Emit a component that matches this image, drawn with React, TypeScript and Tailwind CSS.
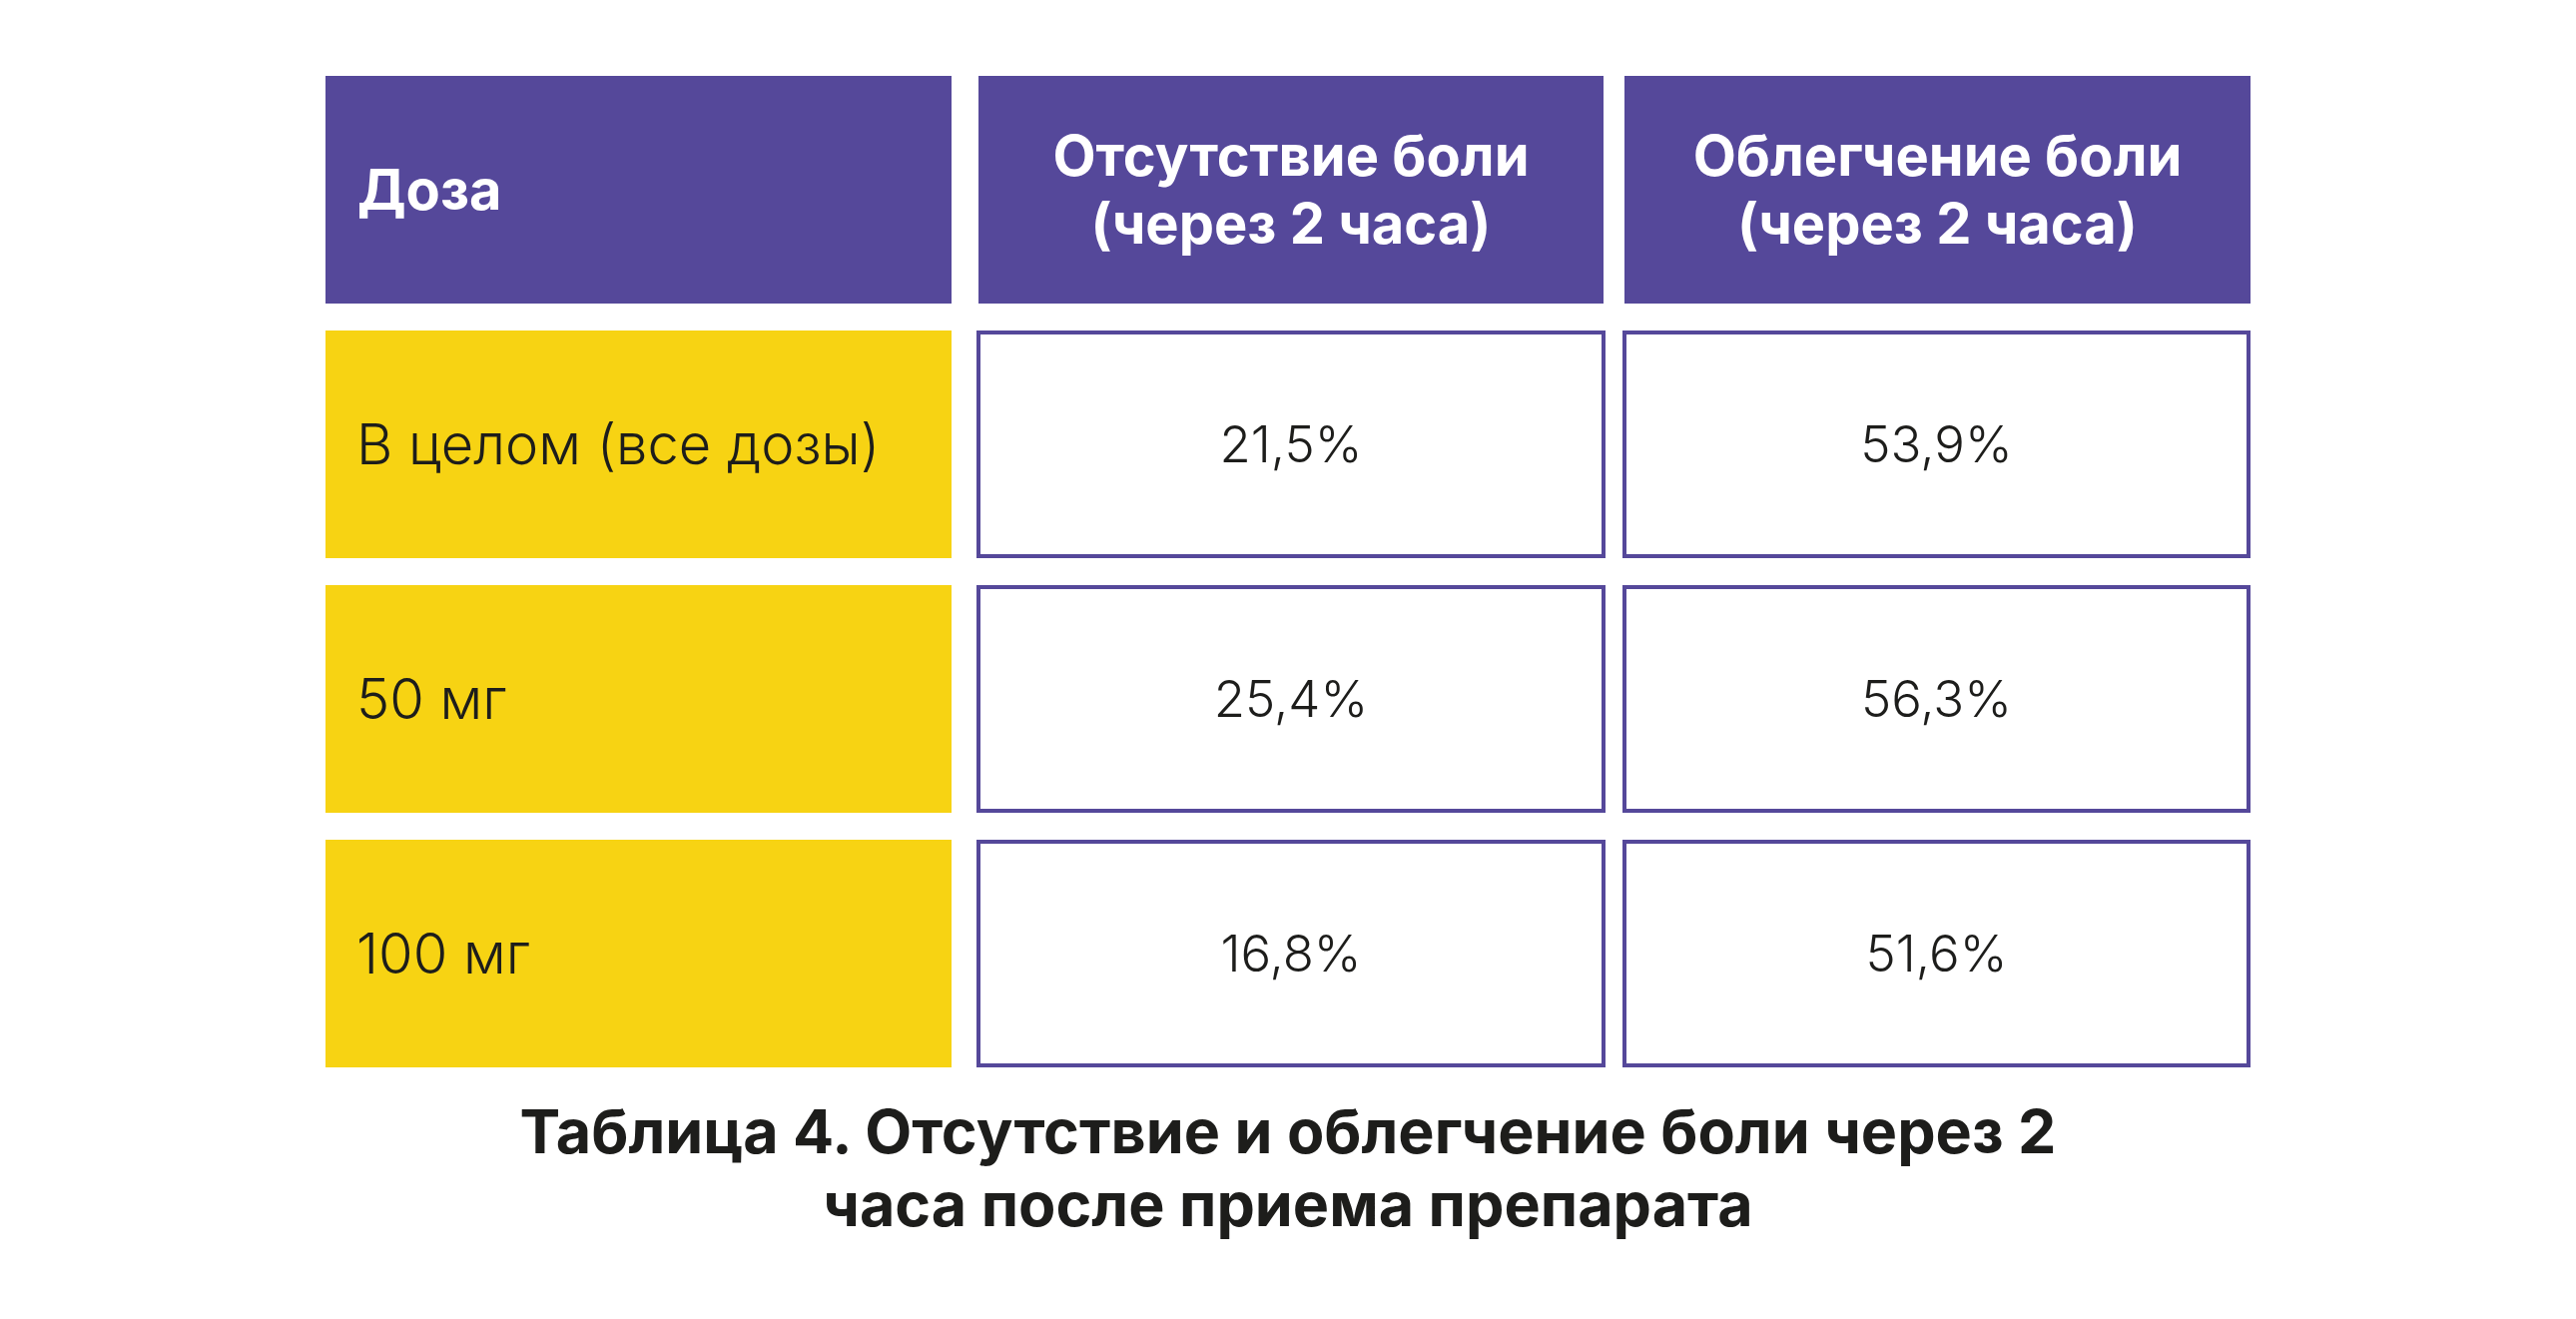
const rows = [
  { dose: 'В целом (все дозы)', absent: '21,5%', relief: '53,9%' },
  { dose: '50 мг', absent: '25,4%', relief: '56,3%' },
  { dose: '100 мг', absent: '16,8%', relief: '51,6%' },
];

const font = "font-['Inter','Noto_Sans',sans-serif]";

export default function App() {
  return (
    <div className={`min-h-screen w-full bg-white ${font}`}>
      <div className="flex flex-col items-center pt-[76px]">
        {/* шапка таблицы */}
        <div className="flex">
          <div className="flex h-[228px] w-[627px] items-center bg-[#55489a] pl-[32px] text-[56px] font-bold text-white">
            Доза
          </div>
          <div className="ml-[27px] flex h-[228px] w-[626px] items-center justify-center bg-[#55489a] text-center text-[56px] font-bold leading-[68px] text-white">
            Отсутствие боли
            <br />
            (через 2 часа)
          </div>
          <div className="ml-[21px] flex h-[228px] w-[627px] items-center justify-center bg-[#55489a] text-center text-[56px] font-bold leading-[68px] text-white">
            Облегчение боли
            <br />
            (через 2 часа)
          </div>
        </div>

        {rows.map((r) => (
          <div key={r.dose} className="mt-[27px] flex">
            <div className="flex h-[228px] w-[627px] items-center bg-[#f7d313] pl-[31px] text-[56px] font-light text-[#1d1d1b]">
              {r.dose}
            </div>
            <div className="ml-[25px] flex h-[228px] w-[630px] items-center justify-center border-4 border-[#55489a] bg-white text-[51px] font-light text-[#1d1d1b]">
              {r.absent}
            </div>
            <div className="ml-[17px] flex h-[228px] w-[629px] items-center justify-center border-4 border-[#55489a] bg-white text-[51px] font-light text-[#1d1d1b]">
              {r.relief}
            </div>
          </div>
        ))}

        <p className="mt-[28px] text-center text-[61px] font-bold leading-[73px] text-[#1d1d1b]">
          Таблица 4. Отсутствие и облегчение боли через 2
          <br />
          часа после приема препарата
        </p>
      </div>
    </div>
  );
}
